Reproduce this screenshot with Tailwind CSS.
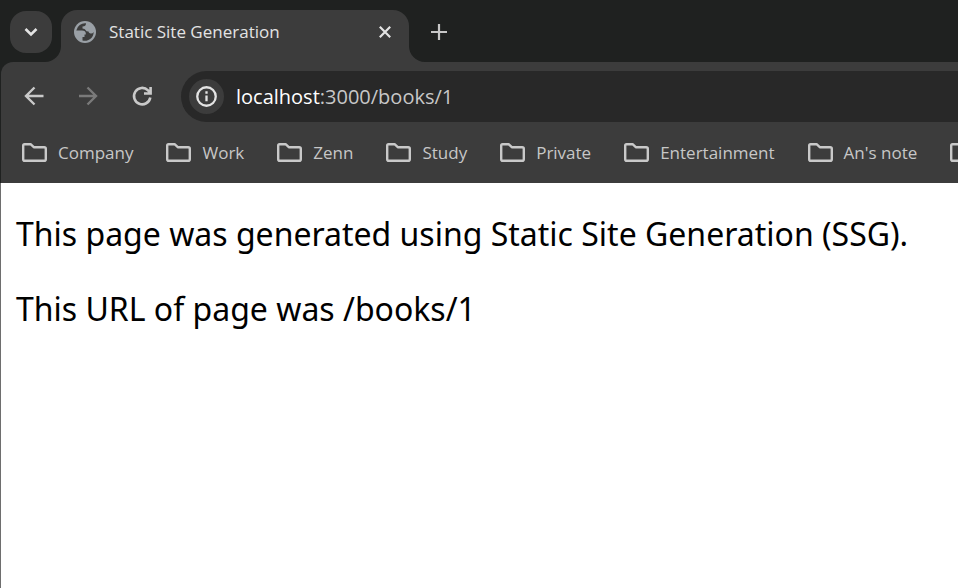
<!DOCTYPE html>
<html lang="en">
<head>
<meta charset="utf-8">
<title>Static Site Generation</title>
<script src="https://cdn.jsdelivr.net/npm/@tailwindcss/browser@4"></script>
</head>
<body class="min-h-screen overflow-x-hidden bg-white font-['Open_Sans','Noto_Sans',sans-serif]">
<svg class="hidden" aria-hidden="true">
  <symbol id="folder" viewBox="0 0 25 19"><path d="M2.5 1.2H8.6L11.8 4.2H22.2Q23.8 4.2 23.8 5.8V16.2Q23.8 17.8 22.2 17.8H2.8Q1.2 17.8 1.2 16.2V2.5Q1.2 1.2 2.5 1.2Z" fill="none" stroke="#c9c9c9" stroke-width="2.4" stroke-linejoin="round"/></symbol>
</svg>
<div class="flex min-h-screen flex-col border-l border-[#6e6e6e]">
  <header class="relative -ml-px bg-[#1f2120] pl-px">
    <div class="flex h-[62px] items-start pt-[11px] pl-[9px]">
      <button aria-label="Search tabs" class="grid size-[42px] shrink-0 place-items-center rounded-2xl bg-[#3c3c3c]">
        <svg class="size-4" viewBox="0 0 16 16" fill="none" stroke="#e3e3e3" stroke-width="2.6"><path d="M2.5 5L8 10.500L13.5 5"/></svg>
      </button>
      <div class="relative ml-[9px] -mt-px flex h-[52px] w-[348px] items-center rounded-t-2xl bg-[#3c3c3c] pr-3 pb-2 pl-[13px]">
        <svg class="absolute bottom-0 -left-4 size-4" viewBox="0 0 16 16" fill="#3c3c3c"><path d="M16 0V16H0A16 16 0 0 0 16 0Z"/></svg>
        <svg class="absolute -right-4 bottom-0 size-4" viewBox="0 0 16 16" fill="#3c3c3c"><path d="M0 0V16H16A16 16 0 0 1 0 0Z"/></svg>
        <svg class="size-[22px] shrink-0" viewBox="0 0 22 22"><circle cx="11" cy="11" r="11" fill="#9aa0a6"/><path d="M12 2.200A8.900 8.900 0 0 0 2.300 9.500H8Q11.800 9.500 11.800 12.500V13.500H10.500V16H8.500V19.500A8.900 8.900 0 0 0 19.700 11Q18.500 13 16.500 12.500Q14.500 12 14.500 10.500Q12 10.500 11.500 9Q11 7.500 8.500 7.500V5.500Q12 5.500 12 2.200Z" fill="#3c3c3c"/></svg>
        <span class="ml-[13px] grow text-[17px] leading-6 text-[#e3e3e3]">Static Site Generation</span>
        <button aria-label="Close tab" class="grid size-6 place-items-center"><svg class="size-3" viewBox="0 0 12 12" stroke="#e3e3e3" stroke-width="2.200"><path d="M.8 .8L11.200 11.200M11.200 .8L.8 11.200"/></svg></button>
      </div>
      <button aria-label="New tab" class="ml-[22px] grid h-[42px] w-4 place-items-center"><svg class="size-4" viewBox="0 0 16 16" stroke="#c7c7c7" stroke-width="2.200"><path d="M8 0V16M0 8H16"/></svg></button>
    </div>
    <div class="rounded-tl-xl bg-[#3c3c3c] pt-[9px]">
      <nav class="flex items-center" aria-label="Navigation">
        <div class="flex w-[180px] shrink-0 gap-[30px] pl-[21px]">
          <button aria-label="Back" class="size-6"><svg viewBox="0 1 24 24" fill="none" stroke="#c9c9c9" stroke-width="2.400"><path d="M21.500 12H4.500M12.500 3.500L4 12L12.500 20.500"/></svg></button>
          <button aria-label="Forward" class="size-6"><svg viewBox="0 1 24 24" fill="none" stroke="#7a7a7a" stroke-width="2.400"><path d="M3 12H19.500M11.500 3.500L20 12L11.500 20.500"/></svg></button>
          <button aria-label="Reload" class="size-6"><svg viewBox="0 1 24 24" fill="none" stroke="#c9c9c9" stroke-width="2.600"><path d="M20.300 13.500A8.200 8.200 0 1 1 18 6.300L20 8.500M20.600 3V9.500H14"/></svg></button>
        </div>
        <div class="flex h-[51px] grow items-center rounded-l-full bg-[#282828] pl-2">
          <button aria-label="View site information" class="grid size-[35px] shrink-0 place-items-center rounded-full bg-[#3c3c3c]"><svg class="size-[21px]" viewBox="0 0 22 22" fill="none" stroke="#e3e3e3" stroke-width="2.400"><circle cx="11" cy="11" r="9.700"/><path d="M11 10V16M11 5.500V8"/></svg></button>
          <div class="ml-3 text-xl leading-7 text-[#c7c7c7]"><span class="text-white">localhost</span>:3000/books/1</div>
        </div>
      </nav>
      <nav class="flex h-[61px] items-center gap-[33px] overflow-hidden pl-[21px] text-[17px] leading-6 whitespace-nowrap text-[#c7c7c7]" aria-label="Bookmarks">
        <a href="#" class="flex shrink-0 items-center gap-[11px]"><svg class="h-[19px] w-[25px]"><use href="#folder"/></svg>Company</a>
        <a href="#" class="flex shrink-0 items-center gap-[11px]"><svg class="h-[19px] w-[25px]"><use href="#folder"/></svg>Work</a>
        <a href="#" class="flex shrink-0 items-center gap-[11px]"><svg class="h-[19px] w-[25px]"><use href="#folder"/></svg>Zenn</a>
        <a href="#" class="flex shrink-0 items-center gap-[11px]"><svg class="h-[19px] w-[25px]"><use href="#folder"/></svg>Study</a>
        <a href="#" class="flex shrink-0 items-center gap-[11px]"><svg class="h-[19px] w-[25px]"><use href="#folder"/></svg>Private</a>
        <a href="#" class="flex shrink-0 items-center gap-[11px]"><svg class="h-[19px] w-[25px]"><use href="#folder"/></svg>Entertainment</a>
        <a href="#" class="flex shrink-0 items-center gap-[11px]"><svg class="h-[19px] w-[25px]"><use href="#folder"/></svg>An's note</a>
        <a href="#" class="shrink-0" aria-label="More bookmarks"><svg class="h-[19px] w-[25px]"><use href="#folder"/></svg></a>
      </nav>
    </div>
  </header>
  <main class="flex flex-col gap-7 px-[15px] pt-[27px] font-['Noto_Sans',sans-serif] text-[32px] leading-[47px] font-normal text-black">
    <p>This page was generated using Static Site Generation (SSG).</p>
    <p>This URL of page was /books/1</p>
  </main>
</div>
</body>
</html>
